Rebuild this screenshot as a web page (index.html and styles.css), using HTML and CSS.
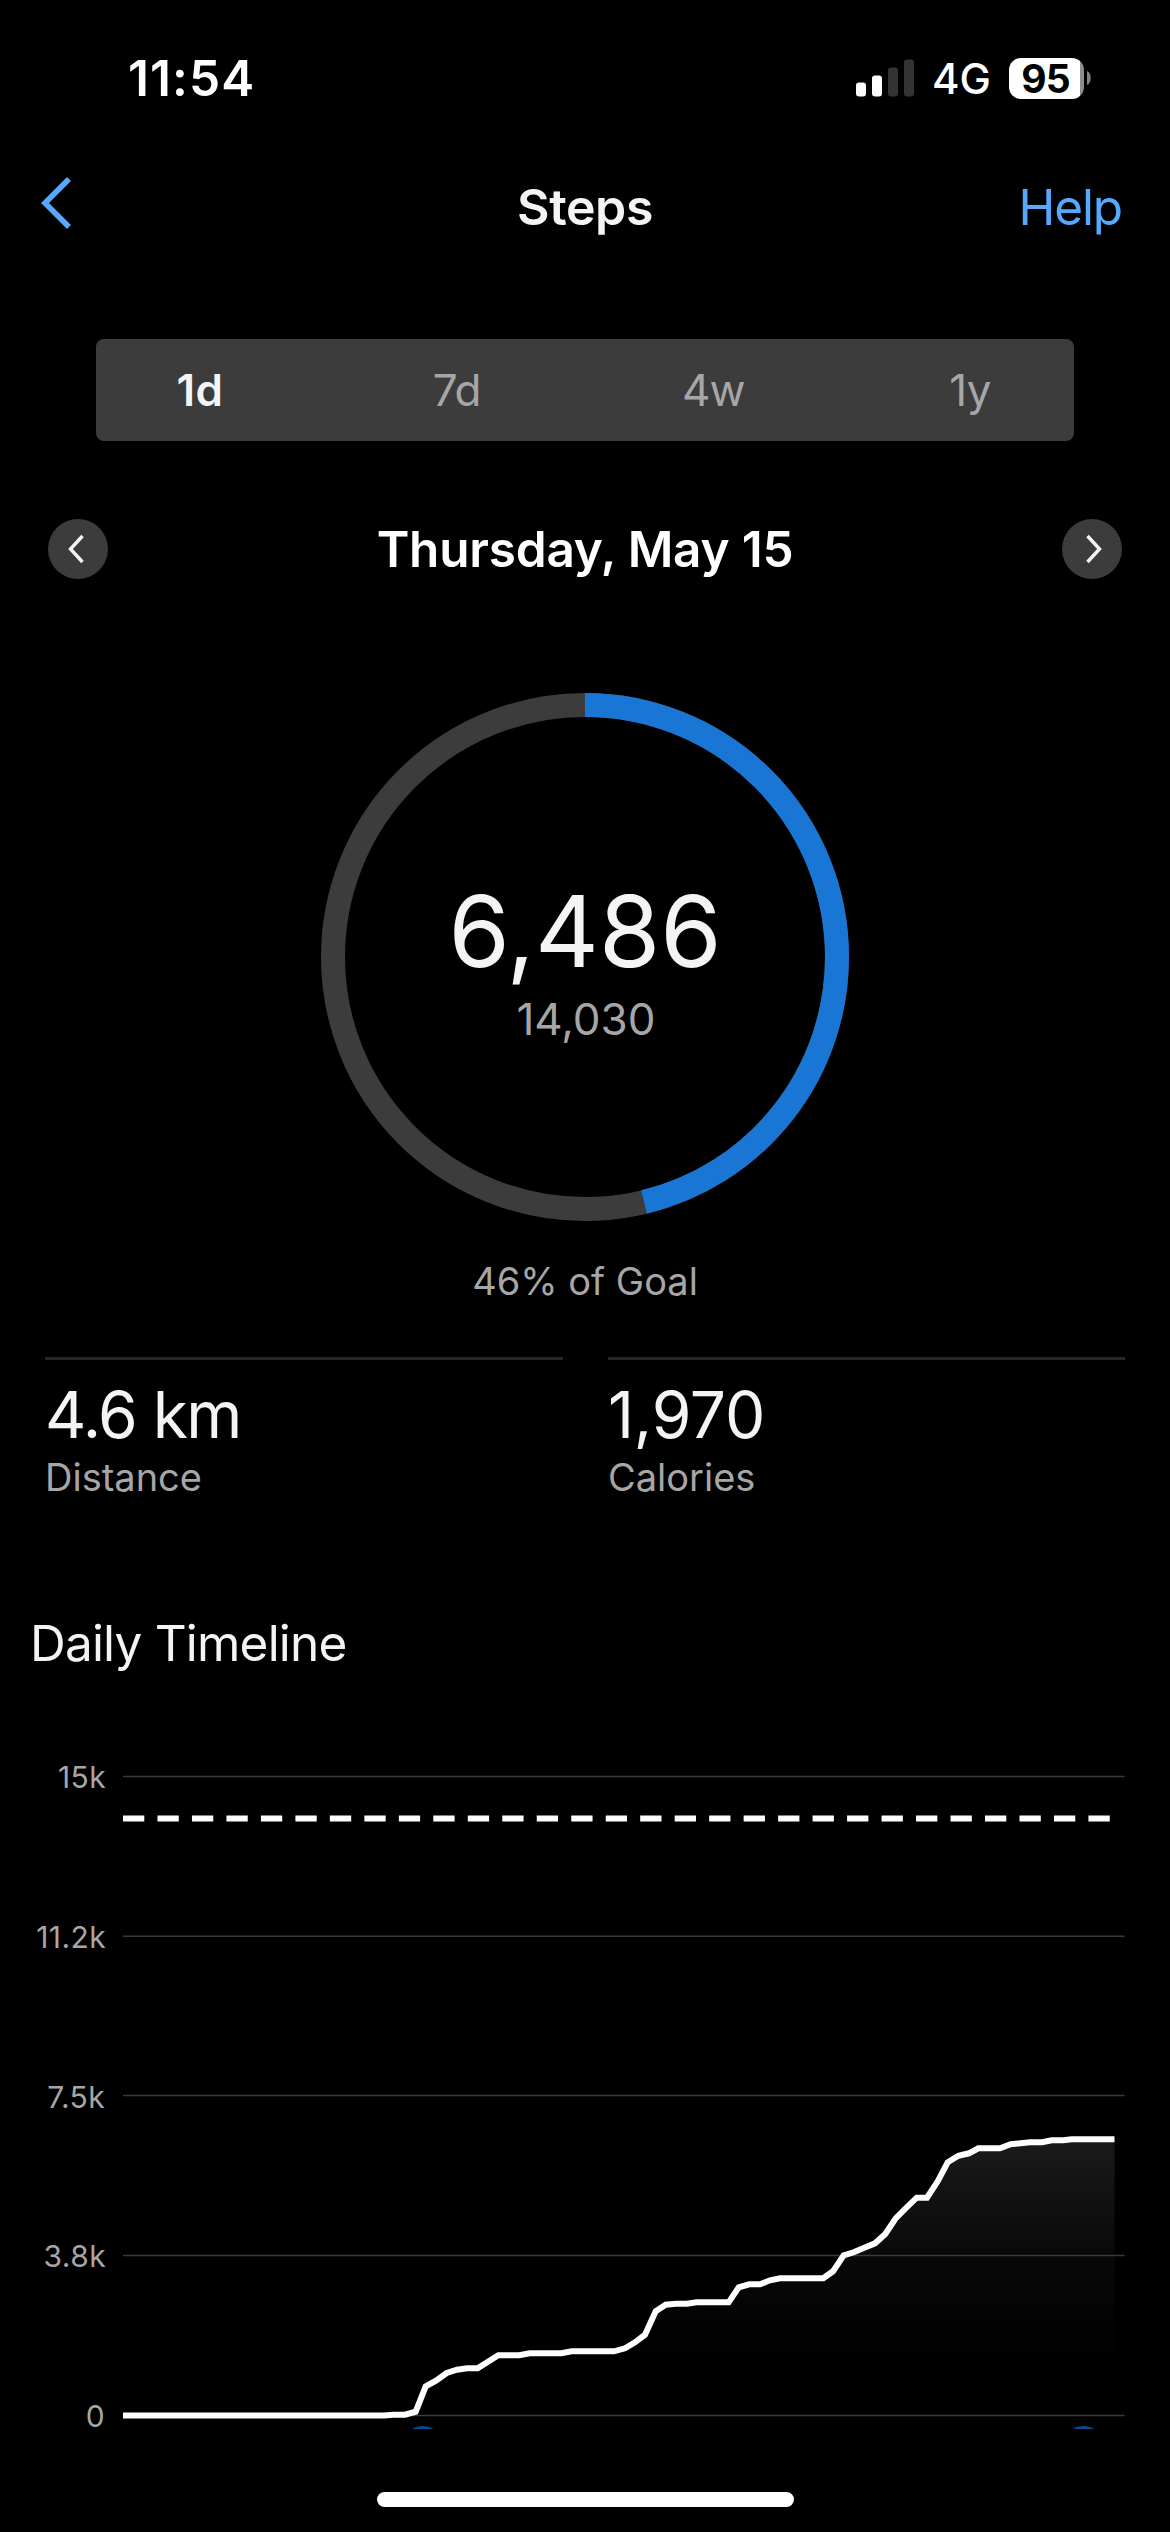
FILE: index.html
```html
<!DOCTYPE html>
<html lang="en">
<head>
<meta charset="utf-8">
<title>Steps</title>
<link rel="stylesheet" href="styles.css">
</head>
<body>
<main class="screen">
  <header class="status">
    <span class="time">11:54</span>
    <div class="status-right">
      <svg class="signal" width="58" height="38" viewBox="0 0 58 38">
        <rect x="0" y="23.5" width="10" height="14" rx="3" fill="#fff"/>
        <rect x="16" y="16.5" width="10" height="21" rx="3" fill="#fff"/>
        <rect x="32" y="8.5" width="10" height="29" rx="3" fill="#333"/>
        <rect x="48" y="0.5" width="10" height="37" rx="3" fill="#333"/>
      </svg>
      <span class="network">4G</span>
      <div class="battery"><span class="battery-level">95</span></div>
      <svg class="battery-cap" width="4" height="14" viewBox="0 0 4 14"><path d="M0 0C5 2 5 12 0 14Z" fill="#808080"/></svg>
    </div>
  </header>

  <nav class="navbar">
    <svg class="back" width="32" height="54" viewBox="0 0 32 54"><path d="M29 3 5 27 29 51" fill="none" stroke="#55a9ff" stroke-width="5.6"/></svg>
    <h1 class="title">Steps</h1>
    <a class="help">Help</a>
  </nav>

  <div class="segments">
    <span class="segment segment-active">1d</span>
    <span class="segment">7d</span>
    <span class="segment">4w</span>
    <span class="segment">1y</span>
  </div>

  <div class="date-row">
    <span class="round"><svg width="60" height="60" viewBox="0 0 60 60"><path d="M34.5 17 22.5 30 34.5 43" fill="none" stroke="#f4f4f4" stroke-width="3.4"/></svg></span>
    <h2 class="date">Thursday, May 15</h2>
    <span class="round"><svg width="60" height="60" viewBox="0 0 60 60"><path d="M25.5 17 37.5 30 25.5 43" fill="none" stroke="#f4f4f4" stroke-width="3.4"/></svg></span>
  </div>

  <section class="goal">
    <div class="ring">
      <svg class="ring-art" width="528" height="528" viewBox="0 0 528 528">
        <circle cx="264" cy="264" r="252" fill="none" stroke="#3c3c3c" stroke-width="24"/>
        <circle cx="264" cy="264" r="252" fill="none" stroke="#1976d5" stroke-width="24" pathLength="100" stroke-dasharray="46.23 100" transform="rotate(-90 264 264)"/>
      </svg>
      <div class="ring-text">
        <span class="steps">6,486</span>
        <span class="target">14,030</span>
      </div>
    </div>
    <p class="percent">46% of Goal</p>
  </section>

  <section class="stats">
    <div class="stat"><span class="value value-distance">4.6 km</span><span class="label">Distance</span></div>
    <div class="stat"><span class="value">1,970</span><span class="label">Calories</span></div>
  </section>

  <h2 class="section-title">Daily Timeline</h2>

  <section class="chart">
    <div class="axis">
      <span>15k</span><span>11.2k</span><span class="tick-inset">7.5k</span><span>3.8k</span><span class="tick-inset">0</span>
    </div>
    <svg class="plot" width="1002" height="670" viewBox="123 1760 1002 670">
      <defs>
        <linearGradient id="fade" gradientUnits="userSpaceOnUse" x1="0" y1="2140" x2="0" y2="2416">
          <stop offset="0" stop-color="#fff" stop-opacity=".105"/>
          <stop offset=".42" stop-color="#fff" stop-opacity=".036"/>
          <stop offset=".7" stop-color="#fff" stop-opacity=".008"/>
          <stop offset="1" stop-color="#fff" stop-opacity="0"/>
        </linearGradient>
      </defs>
      <path d="M384 2416.5 393.3 2415.7 405 2415.7 415.7 2412.7 425.7 2387.3 436 2381.7 446.7 2374 457 2370.7 467.3 2369.3 477.7 2369.3 488 2362.7 498.3 2356.3 519.3 2356.3 529.7 2354.3 561.3 2354.3 571.7 2352.3 614 2352.3 625 2349.3 635 2343.3 645 2335.7 655.7 2312.3 665.7 2305.7 676 2304.7 686.7 2304.7 696.7 2303.3 728.7 2303.3 738.7 2288.3 749.3 2285.3 760 2285.3 770 2281.3 780 2279.3 823.3 2279.3 833 2272.3 843.7 2256.3 853.7 2253.3 864.3 2248.7 875 2244.3 885.3 2235 895.7 2219.3 906 2209 916.7 2198.7 927 2198.7 937.7 2182.3 947.7 2163.3 958.3 2156.7 969 2154.3 978.3 2149.3 1000 2149.3 1010.7 2145.3 1030 2143.3 1042 2143.3 1051.7 2141.3 1063.3 2141.3 1071.7 2140.3 1114.5 2140.3V2416.5Z" fill="url(#fade)"/>
      <path d="M123 1777.5H1124.500M123 1937.3H1124.500M123 2096.5H1124.500M123 2256.5H1124.500M123 2416.5H1124.500" stroke="#3a3a3a" stroke-width="1.6"/>
      <path d="M123 1819.500H1114.500" stroke="#fff" stroke-width="6" stroke-dasharray="21.300 13.180"/>
      <path d="M123 2416.5 384 2416.5 393.3 2415.7 405 2415.7 415.7 2412.7 425.7 2387.3 436 2381.7 446.7 2374 457 2370.7 467.3 2369.3 477.7 2369.3 488 2362.7 498.3 2356.3 519.3 2356.3 529.7 2354.3 561.3 2354.3 571.7 2352.3 614 2352.3 625 2349.3 635 2343.3 645 2335.7 655.7 2312.3 665.7 2305.7 676 2304.7 686.7 2304.7 696.7 2303.3 728.7 2303.3 738.7 2288.3 749.3 2285.3 760 2285.3 770 2281.3 780 2279.3 823.3 2279.3 833 2272.3 843.7 2256.3 853.7 2253.3 864.3 2248.7 875 2244.3 885.3 2235 895.7 2219.3 906 2209 916.7 2198.7 927 2198.7 937.7 2182.3 947.7 2163.3 958.3 2156.7 969 2154.3 978.3 2149.3 1000 2149.3 1010.7 2145.3 1030 2143.3 1042 2143.3 1051.7 2141.3 1063.3 2141.3 1071.7 2140.3 1114.5 2140.3" fill="none" stroke="#fff" stroke-width="6"/>
      <circle cx="422.7" cy="2448" r="21" fill="#0b4a90"/>
      <circle cx="1083.5" cy="2448" r="21" fill="#0b4a90"/>
    </svg>
  </section>

  <div class="home-bar"></div>
</main>
</body>
</html>
```
FILE: styles.css
```css
* { box-sizing: border-box; }

body {
  margin: 0;
  background: #000;
  color: #f4f4f4;
  font-family: Inter, "Liberation Sans", sans-serif;
}

h1, h2, p { margin: 0; }
svg { display: block; flex: none; }

.screen {
  display: flex;
  flex-direction: column;
  width: 1170px;
  height: 2532px;
  overflow: hidden;
}

.status {
  display: flex;
  justify-content: space-between;
  height: 156px;
  padding: 0 79px 0 128px;
  color: #fff;
}

.time {
  line-height: 156px;
  font-size: 49.5px;
  font-weight: 600;
  letter-spacing: 1.1px;
}

.status-right {
  display: flex;
  align-items: center;
}

.signal { margin-top: -1px; }

.network {
  margin-left: 18px;
  width: 58px;
  font-size: 42px;
  font-weight: 450;
  line-height: 50px;
  padding-top: 2px;
}

.battery {
  display: flex;
  align-items: center;
  justify-content: center;
  width: 75px;
  height: 41px;
  margin-left: 19px;
  padding-right: 2px;
  border-radius: 12px;
  background: linear-gradient(90deg, #fff 71px, #8c8c8c 71px);
}

.battery-level {
  color: #000;
  font-size: 39px;
  font-weight: 700;
  line-height: 41px;
  letter-spacing: -0.8px;
}

.battery-cap { margin-left: 3px; }

.navbar {
  display: grid;
  grid-template-columns: 1fr auto 1fr;
  align-items: center;
  height: 102px;
  padding: 0 48px 0 40px;
}

.back { margin-top: -9px; }

.title {
  padding-left: 8px;
  font-size: 50px;
  font-weight: 600;
  line-height: 102px;
  letter-spacing: -0.4px;
}

.help {
  justify-self: end;
  color: #55a9ff;
  font-size: 49.5px;
  letter-spacing: -1.1px;
}

.segments {
  display: flex;
  justify-content: space-between;
  align-items: center;
  height: 102px;
  margin: 81px 96px 0;
  padding: 0 81px;
  border-radius: 8px;
  background: #3c3c3c;
}

.segment {
  display: flex;
  justify-content: center;
  width: 46px;
  color: #a6a6a6;
  font-size: 44px;
  letter-spacing: -0.8px;
}

.segment-active {
  color: #f4f4f4;
  font-weight: 600;
  letter-spacing: 0.6px;
}

.date-row {
  display: flex;
  justify-content: space-between;
  align-items: center;
  height: 60px;
  margin: 78px 48px 0;
}

.round {
  width: 60px;
  height: 60px;
  border-radius: 50%;
  background: #3c3c3c;
}

.date {
  color: #fff;
  font-size: 49.5px;
  font-weight: 600;
  letter-spacing: -0.2px;
}

.goal {
  display: flex;
  flex-direction: column;
  align-items: center;
  margin-top: 114px;
}

.ring { display: grid; }

.ring-art, .ring-text { grid-area: 1 / 1; }

.ring-text {
  display: flex;
  flex-direction: column;
  align-items: center;
  padding-top: 178px;
}

.steps {
  font-size: 99px;
  line-height: 120px;
}

.target {
  padding-left: 2px;
  color: #a6a6a6;
  font-size: 44px;
  line-height: 56px;
}

.percent {
  margin-top: 35px;
  color: #a6a6a6;
  font-size: 38px;
  line-height: 50px;
}

.stats {
  display: grid;
  grid-template-columns: 518px 517px;
  column-gap: 45px;
  margin: 51px 45px 0;
}

.stat {
  display: flex;
  flex-direction: column;
  border-top: 3px solid #252525;
}

.value {
  margin-top: 15px;
  font-size: 64px;
  line-height: 80px;
  letter-spacing: -0.2px;
}

.value-distance { letter-spacing: -1.5px; }

.label {
  color: #a6a6a6;
  font-size: 38px;
  line-height: 44px;
}

.section-title {
  margin-top: 114px;
  padding-left: 30px;
  font-size: 49.5px;
  font-weight: 400;
  line-height: 60px;
  letter-spacing: -0.8px;
}

.chart {
  display: flex;
  gap: 17px;
  height: 670px;
  margin-top: 86px;
}

.axis {
  display: flex;
  flex-direction: column;
  justify-content: space-between;
  width: 106px;
  height: 675px;
  color: #a6a6a6;
  font-size: 30px;
  line-height: 36px;
  letter-spacing: 0.4px;
  text-align: right;
}

.tick-inset { padding-right: 1px; }

.home-bar {
  flex: none;
  width: 417px;
  height: 15px;
  margin: 63px auto 0;
  border-radius: 7.5px;
  background: #fff;
}
```
